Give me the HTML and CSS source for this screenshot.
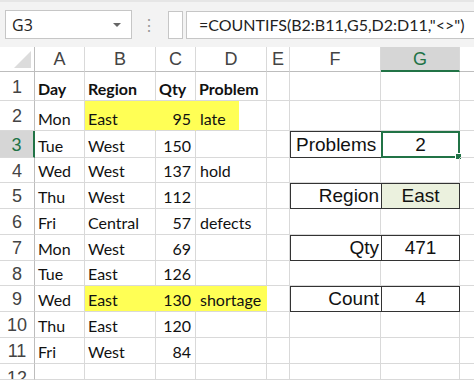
FILE: index.html
```html
<!DOCTYPE html>
<html lang="en">
<head>
    <meta charset="UTF-8">
    <title>COUNTIFS</title>
    <link rel="stylesheet" href="styles.css">
</head>
<body>
    <div class="toolbar">
        <div class="name-box">
            <span>G3</span>
            <span class="caret"></span>
        </div>
        <div class="dots">&#8942;</div>
        <div class="mini-box"></div>
        <div class="formula">=COUNTIFS(B2:B11,G5,D2:D11,"&lt;&gt;")</div>
    </div>

    <div class="sheet">
        <!-- заголовки столбцов -->
        <div class="corner"><span class="tri"></span></div>
        <div class="col-hdr">A</div>
        <div class="col-hdr">B</div>
        <div class="col-hdr">C</div>
        <div class="col-hdr">D</div>
        <div class="col-hdr">E</div>
        <div class="col-hdr">F</div>
        <div class="col-hdr sel">G</div>
        <div class="col-hdr last"></div>

        <!-- 1 -->
        <div class="row-hdr">1</div>
        <div class="cell bold">Day</div>
        <div class="cell bold">Region</div>
        <div class="cell bold">Qty</div>
        <div class="cell bold over">Problem</div>
        <div class="cell"></div>
        <div class="cell"></div>
        <div class="cell"></div>
        <div class="cell last"></div>

        <!-- 2 -->
        <div class="row-hdr">2</div>
        <div class="cell">Mon</div>
        <div class="cell yellow">East</div>
        <div class="cell yellow num">95</div>
        <div class="cell yellow-part">late</div>
        <div class="cell"></div>
        <div class="cell"></div>
        <div class="cell"></div>
        <div class="cell last"></div>

        <!-- 3 -->
        <div class="row-hdr sel">3</div>
        <div class="cell">Tue</div>
        <div class="cell">West</div>
        <div class="cell num">150</div>
        <div class="cell"></div>
        <div class="cell"></div>
        <div class="cell box-label">Problems</div>
        <div class="cell box-value active">2<span class="handle"></span></div>
        <div class="cell last"></div>

        <!-- 4 -->
        <div class="row-hdr">4</div>
        <div class="cell">Wed</div>
        <div class="cell">West</div>
        <div class="cell num">137</div>
        <div class="cell">hold</div>
        <div class="cell"></div>
        <div class="cell"></div>
        <div class="cell"></div>
        <div class="cell last"></div>

        <!-- 5 -->
        <div class="row-hdr">5</div>
        <div class="cell">Thu</div>
        <div class="cell">West</div>
        <div class="cell num">112</div>
        <div class="cell"></div>
        <div class="cell"></div>
        <div class="cell box-label right">Region</div>
        <div class="cell box-value green">East</div>
        <div class="cell last"></div>

        <!-- 6 -->
        <div class="row-hdr">6</div>
        <div class="cell">Fri</div>
        <div class="cell">Central</div>
        <div class="cell num">57</div>
        <div class="cell over">defects</div>
        <div class="cell"></div>
        <div class="cell"></div>
        <div class="cell"></div>
        <div class="cell last"></div>

        <!-- 7 -->
        <div class="row-hdr">7</div>
        <div class="cell">Mon</div>
        <div class="cell">West</div>
        <div class="cell num">69</div>
        <div class="cell"></div>
        <div class="cell"></div>
        <div class="cell box-label right">Qty</div>
        <div class="cell box-value">471</div>
        <div class="cell last"></div>

        <!-- 8 -->
        <div class="row-hdr">8</div>
        <div class="cell">Tue</div>
        <div class="cell">East</div>
        <div class="cell num">126</div>
        <div class="cell"></div>
        <div class="cell"></div>
        <div class="cell"></div>
        <div class="cell"></div>
        <div class="cell last"></div>

        <!-- 9 -->
        <div class="row-hdr">9</div>
        <div class="cell">Wed</div>
        <div class="cell yellow">East</div>
        <div class="cell yellow num">130</div>
        <div class="cell yellow over">shortage</div>
        <div class="cell"></div>
        <div class="cell box-label right">Count</div>
        <div class="cell box-value">4</div>
        <div class="cell last"></div>

        <!-- 10 -->
        <div class="row-hdr">10</div>
        <div class="cell">Thu</div>
        <div class="cell">East</div>
        <div class="cell num">120</div>
        <div class="cell"></div>
        <div class="cell"></div>
        <div class="cell"></div>
        <div class="cell"></div>
        <div class="cell last"></div>

        <!-- 11 -->
        <div class="row-hdr">11</div>
        <div class="cell">Fri</div>
        <div class="cell">West</div>
        <div class="cell num">84</div>
        <div class="cell"></div>
        <div class="cell"></div>
        <div class="cell"></div>
        <div class="cell"></div>
        <div class="cell last"></div>

        <!-- 12 -->
        <div class="row-hdr cut">12</div>
        <div class="cell"></div>
        <div class="cell"></div>
        <div class="cell"></div>
        <div class="cell"></div>
        <div class="cell"></div>
        <div class="cell"></div>
        <div class="cell"></div>
        <div class="cell last"></div>
    </div>
</body>
</html>
```

FILE: styles.css
```css
body {
    margin: 0;
    width: 474px;
    height: 380px;
    overflow: hidden;
    background: #fff;
    font-family: Lato, sans-serif;
}
.toolbar {
    height: 47px;
    box-sizing: border-box;
    padding: 8px 0 0 5px;
    background: #f3f3f3;
    border-top: 2px solid #e6e6e6;
    display: flex;
    align-items: flex-start;
}
.name-box {
    width: 127px;
    height: 29px;
    box-sizing: border-box;
    border: 1px solid #c6c6c6;
    background: #fff;
    display: flex;
    align-items: center;
    justify-content: space-between;
    padding: 0 10px 0 6px;
    font-family: "Open Sans", sans-serif;
    font-size: 16px;
    color: #222;
}
.caret {
    width: 0;
    height: 0;
    border-left: 4px solid transparent;
    border-right: 4px solid transparent;
    border-top: 4px solid #666;
}
.dots {
    width: 34px;
    text-align: center;
    color: #9a9a9a;
    font-size: 16px;
    line-height: 29px;
}
.mini-box {
    width: 15px;
    height: 28px;
    box-sizing: border-box;
    border: 1px solid #c6c6c6;
    background: #fff;
    margin-left: 2px;
    margin-top: 1px;
}
.formula {
    flex: 1;
    height: 28px;
    box-sizing: border-box;
    margin-top: 1px;
    margin-left: 3px;
    border: 1px solid #c6c6c6;
    border-right: none;
    background: #fff;
    padding-left: 12px;
    font-size: 16px;
    line-height: 26px;
    color: #222;
    white-space: nowrap;
}

.sheet {
    display: grid;
    grid-template-columns: 35px 50px 71px 40px 71px 23px 91px 79px 1fr;
    grid-template-rows: 25px 29px 30px 27px 25px 26px 26px 26px 25px 26px 26px 26px 16px;
}
.sheet > div {
    box-sizing: border-box;
    border-right: 1px solid #d9d9d9;
    border-bottom: 1px solid #d9d9d9;
    position: relative;
}
.corner {
    border-bottom-color: #bdbdbd !important;
    border-right-color: #bdbdbd !important;
}
.tri {
    position: absolute;
    right: 3px;
    bottom: 3px;
    width: 0;
    height: 0;
    border-left: 17px solid transparent;
    border-bottom: 17px solid #dcdcdc;
}
.col-hdr {
    border-bottom-color: #bdbdbd !important;
    border-right-color: #dadada;
    font-family: "Liberation Sans", sans-serif;
    font-size: 18px;
    color: #444;
    text-align: center;
    line-height: 25px;
}
.col-hdr.sel {
    background: #d6d6d6;
    color: #217346;
    border-bottom: 2px solid #217346 !important;
}
.row-hdr {
    border-right-color: #bdbdbd !important;
    font-family: "Liberation Sans", sans-serif;
    font-size: 18px;
    color: #444;
    display: flex;
    align-items: center;
    justify-content: center;
    padding-top: 2px;
}
.row-hdr.sel {
    background: #d6d6d6;
    color: #217346;
    border-right: 2px solid #217346 !important;
}
.row-hdr.cut {
    align-items: flex-start;
    padding-top: 4px;
    overflow: hidden;
}
.cell {
    font-size: 16px;
    color: #111;
    padding: 0 4px 2px 3px;
    display: flex;
    align-items: flex-end;
    white-space: nowrap;
}
.cell.over {
    overflow: visible;
    z-index: 1;
}
.last {
    border-right: none !important;
}
.bold {
    font-weight: bold;
}
.num {
    justify-content: flex-end;
}
.yellow {
    background: #ffff55;
    border-right-color: #ffff55 !important;
}
.yellow-part {
    padding-left: 4px;
    background: linear-gradient(to right, #ffff55 43px, #fff 43px);
}
.cell.yellow + .yellow-part,
.cell.num + .cell {
    padding-left: 4px;
}

.box-label,
.box-value {
    font-family: "Liberation Sans", sans-serif;
    font-size: 19px;
    color: #111;
    border: 1px solid #333 !important;
    border-right: none !important;
    align-items: center;
    padding-bottom: 0;
}
.box-label {
    padding-left: 5px;
}
.box-label.right {
    justify-content: flex-end;
    padding-right: 2px;
}
.box-value {
    border-right: 1px solid #333 !important;
    justify-content: center;
    padding: 0;
}
.box-value.green {
    background: #ebf1de;
}
.box-value.active {
    border: 2px solid #217346 !important;
}
.handle {
    position: absolute;
    right: -4px;
    bottom: -4px;
    width: 5px;
    height: 5px;
    background: #217346;
    border: 1px solid #fff;
}
```
